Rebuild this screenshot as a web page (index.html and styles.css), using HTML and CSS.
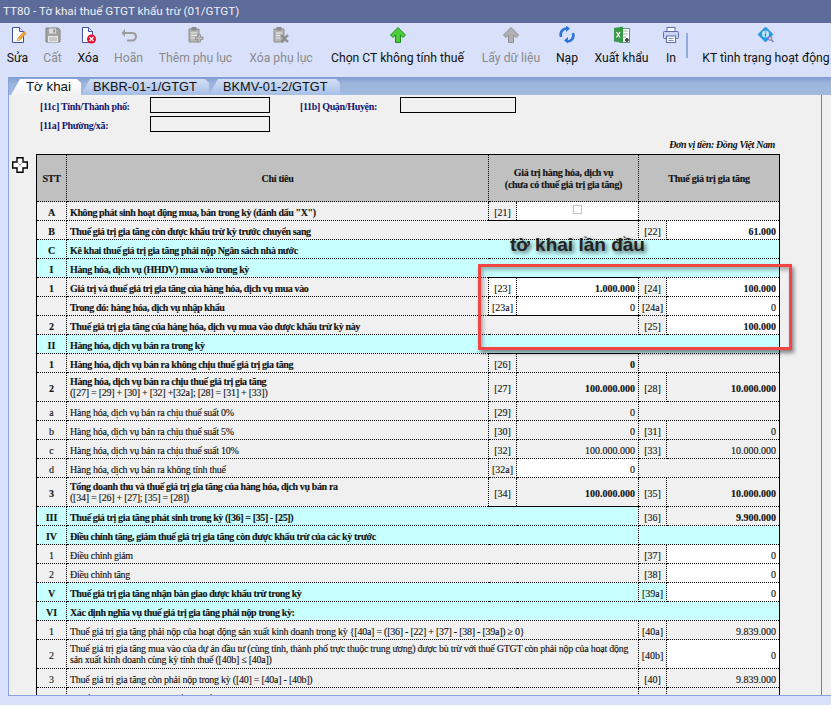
FILE: index.html
```html
<!DOCTYPE html>
<html lang="vi">
<head>
<meta charset="utf-8">
<title>TT80 - Tờ khai thuế GTGT khấu trừ (01/GTGT)</title>
<link rel="stylesheet" href="styles.css">
</head>
<body>
<div class="app">
  <header class="titlebar">TT80 - Tờ khai thuế GTGT khẩu trừ (01/GTGT)</header>
  <nav class="toolbar">
    <button class="tb"><svg class="ic" viewBox="0 0 18 18"><path d="M3.500 1.500h7l4 4v11h-11z" fill="#fff" stroke="#3f51a8"/><path d="M10.500 1.500v4h4" fill="#dfe6fb" stroke="#3f51a8"/><path d="M8 15l1-3 6-6.500 2 2-6 6.500z" fill="#f2a33a" stroke="#b5701d" stroke-width=".6"/><path d="M8 15l1-3 2 1.500z" fill="#f3dcb0"/></svg><span>Sửa</span></button>
    <button class="tb off"><svg class="ic" viewBox="0 0 18 18"><path d="M2 2h12l2 2v12H2z" fill="#a3a3a3" stroke="#808080"/><rect x="5" y="2.500" width="7" height="5" fill="#dcdcdc"/><rect x="9.500" y="3.500" width="1.500" height="3" fill="#808080"/><rect x="4" y="10" width="10" height="6" fill="#e8e8e8"/><path d="M5 12h8M5 14h8" stroke="#999" stroke-width=".8"/></svg><span>Cất</span></button>
    <button class="tb"><svg class="ic" viewBox="0 0 18 18"><path d="M3.500 1.500h6l4 4v11h-10z" fill="#fff" stroke="#3f51a8"/><path d="M9.500 1.500v4h4" fill="#dfe6fb" stroke="#3f51a8"/><circle cx="12.500" cy="13" r="4.500" fill="#e8112d"/><path d="M10.500 11l4 4M14.500 11l-4 4" stroke="#fff" stroke-width="1.300"/></svg><span>Xóa</span></button>
    <button class="tb off"><svg class="ic" viewBox="0 0 18 18"><path d="M5 3L1.500 7 5 11z" fill="#9c9c9c"/><path d="M4 7h8c2.500 0 4 1.500 4 3.500S14.500 14.500 12 14.500H7" fill="none" stroke="#9c9c9c" stroke-width="2"/></svg><span>Hoãn</span></button>
    <button class="tb off"><svg class="ic" viewBox="0 0 18 18"><path d="M2 3h10v13H2z" fill="#b5b5b5" stroke="#8c8c8c"/><rect x="4.500" y="1" width="5" height="3.500" fill="#8c8c8c"/><path d="M4 7h6M4 9.500h6M4 12h4" stroke="#eee"/><path d="M11 8.500h2.500V11H16v2.500h-2.500V16H11v-2.500H8.500V11H11z" fill="#bcbcbc" stroke="#8c8c8c" stroke-width=".8"/></svg><span>Thêm phụ lục</span></button>
    <button class="tb off"><svg class="ic" viewBox="0 0 18 18"><path d="M2 3h10v13H2z" fill="#b5b5b5" stroke="#8c8c8c"/><rect x="4.500" y="1" width="5" height="3.500" fill="#8c8c8c"/><path d="M4 7h6M4 9.500h6M4 12h4" stroke="#eee"/><path d="M9 9l7 7M16 9l-7 7" stroke="#8c8c8c" stroke-width="2.400"/></svg><span>Xóa phụ lục</span></button>
    <button class="tb"><svg class="ic" viewBox="0 0 18 18"><path d="M9 1.500L16.500 9 14 11.500l-2.500-2.500v7.500h-5V9L4 11.500 1.500 9z" fill="#4ccb3c" stroke="#1f8f1a"/></svg><span>Chọn CT không tính thuế</span></button>
    <button class="tb off"><svg class="ic" viewBox="0 0 18 18"><path d="M9 1.500L16.500 9 14 11.500l-2.500-2.500v7.500h-5V9L4 11.500 1.500 9z" fill="#b0b0b0" stroke="#8f8f8f"/></svg><span>Lấy dữ liệu</span></button>
    <button class="tb"><svg class="ic" viewBox="0 0 18 18"><path d="M3 11C1.500 6 5 2.500 8.500 2.500" fill="none" stroke="#2f74d8" stroke-width="2.600"/><path d="M7 0l4 3-4 3.500z" fill="#2f74d8" transform="translate(1 -.5)"/><path d="M15 7c1.500 5-2 8.500-5.500 8.500" fill="none" stroke="#2f74d8" stroke-width="2.600"/><path d="M10 11.500l-4 3.500 4 3z" fill="#2f74d8" transform="translate(0 -.5)"/></svg><span>Nạp</span></button>
    <button class="tb"><svg class="ic" viewBox="0 0 18 18"><path d="M7 2.500h9.500v14H7z" fill="#fff" stroke="#5f8f7f"/><path d="M10 5h5M10 8h5M10 11h3" stroke="#8fb8a8"/><path d="M1 2l9-1.500v16.500L1 15.500z" fill="#3a9a4c"/><path d="M3.500 6l3.500 5.500M7 6l-3.500 5.500" stroke="#fff" stroke-width="1.200"/><path d="M12 14h4M14 12v4" stroke="#333" stroke-width="1.400"/></svg><span>Xuất khẩu</span></button>
    <button class="tb"><svg class="ic" viewBox="0 0 18 18"><rect x="5" y="1.500" width="8" height="4" fill="#fff" stroke="#5b6db0"/><rect x="1.500" y="5.500" width="15" height="7" rx="1" fill="#c9d2f2" stroke="#5b6db0"/><rect x="4.500" y="10" width="9" height="6.500" fill="#fff" stroke="#5b6db0"/><path d="M6.500 12.500h5M6.500 14.500h5" stroke="#5b6db0" stroke-width=".8"/></svg><span>In</span></button>
    <div class="sep"></div>
    <button class="tb"><svg class="ic" viewBox="0 0 18 18"><path d="M8.500 1L16 8.500 8.500 16 1 8.500z" fill="#1f9ce8" stroke="#1575c4" stroke-width=".6"/><circle cx="8.500" cy="8" r="3.600" fill="#bfe6fb"/><path d="M8.500 5.500v1M8.500 7.500v3" stroke="#1575c4" stroke-width="1.200"/><circle cx="13" cy="12.500" r="1.800" fill="#d8d0f0" stroke="#7d6ec0"/><path d="M14.300 13.800l2.200 2.200" stroke="#7d6ec0" stroke-width="1.400"/></svg><span>KT tình trạng hoạt động</span></button>
  </nav>
  <main class="main">
    <div class="tabs">
      <div class="tab active">Tờ khai</div>
      <div class="tab second">BKBR-01-1/GTGT</div>
      <div class="tab third">BKMV-01-2/GTGT</div>
    </div>
    <section class="panel">
      <div class="form">
        <label class="flabel">[11c] Tỉnh/Thành phố:</label><div class="fbox"></div>
        <label class="flabel second-label">[11b] Quận/Huyện:</label><div class="fbox narrow"></div>
        <label class="flabel">[11a] Phường/xã:</label><div class="fbox"></div>
      </div>
      <p class="unit">Đơn vị tiền: Đồng Việt Nam</p>
      <div class="tablewrap">
        <svg class="move" viewBox="0 0 16 16"><path d="M5 .7h6v4.300h4.300v6H11v4.300H5V11H.7V5H5z" fill="#fff" stroke="#000" stroke-width="1.400"/><path d="M4.500 4.500l7 7M11.500 4.500l-7 7" stroke="#555" stroke-width=".8" stroke-dasharray="1 1"/></svg>
        <table class="tax">
          <colgroup><col class="c1"><col class="c2"><col class="c3"><col class="c4"><col class="c5"><col class="c6"></colgroup>
          <thead>
            <tr class="head"><th>STT</th><th>Chỉ tiêu</th><th colspan="2">Giá trị hàng hóa, dịch vụ<br>(chưa có thuế giá trị gia tăng)</th><th colspan="2">Thuế giá trị gia tăng</th></tr>
          </thead>
          <tbody>
            <tr class="bold"><td class="n">A</td><td class="d">Không phát sinh hoạt động mua, bán trong kỳ (đánh dấu "X")</td><td class="k sb">[21]</td><td class="w sb chk"><span class="check"></span></td><td colspan="2"></td></tr>
            <tr class="bold"><td class="n">B</td><td class="d" colspan="3">Thuế giá trị gia tăng còn được khấu trừ kỳ trước chuyển sang</td><td class="k">[22]</td><td class="v w">61.000</td></tr>
            <tr class="bold cy"><td class="n">C</td><td class="d" colspan="5">Kê khai thuế giá trị gia tăng phải nộp Ngân sách nhà nước</td></tr>
            <tr class="bold cy"><td class="n">I</td><td class="d" colspan="5">Hàng hóa, dịch vụ (HHDV) mua vào trong kỳ</td></tr>
            <tr class="bold"><td class="n">1</td><td class="d">Giá trị và thuế giá trị gia tăng của hàng hóa, dịch vụ mua vào</td><td class="k w st">[23]</td><td class="v w st">1.000.000</td><td class="k">[24]</td><td class="v w">100.000</td></tr>
            <tr class="bold"><td class="n"></td><td class="d">Trong đó: hàng hóa, dịch vụ nhập khẩu</td><td class="k w sb reg">[23a]</td><td class="v w sb reg">0</td><td class="k reg">[24a]</td><td class="v w reg">0</td></tr>
            <tr class="bold"><td class="n">2</td><td class="d" colspan="3">Thuế giá trị gia tăng của hàng hóa, dịch vụ mua vào được khấu trừ kỳ này</td><td class="k">[25]</td><td class="v w">100.000</td></tr>
            <tr class="bold cy"><td class="n">II</td><td class="d" colspan="5">Hàng hóa, dịch vụ bán ra trong kỳ</td></tr>
            <tr class="bold"><td class="n">1</td><td class="d">Hàng hóa, dịch vụ bán ra không chịu thuế giá trị gia tăng</td><td class="k st">[26]</td><td class="v st">0</td><td colspan="2"></td></tr>
            <tr class="bold tall"><td class="n">2</td><td class="d">Hàng hóa, dịch vụ bán ra chịu thuế giá trị gia tăng<br><span class="reg">([27] = [29] + [30] + [32] +[32a]; [28] = [31] + [33])</span></td><td class="k">[27]</td><td class="v">100.000.000</td><td class="k">[28]</td><td class="v">10.000.000</td></tr>
            <tr><td class="n">a</td><td class="d">Hàng hóa, dịch vụ bán ra chịu thuế suất 0%</td><td class="k">[29]</td><td class="v">0</td><td colspan="2"></td></tr>
            <tr><td class="n">b</td><td class="d">Hàng hóa, dịch vụ bán ra chịu thuế suất 5%</td><td class="k">[30]</td><td class="v">0</td><td class="k">[31]</td><td class="v">0</td></tr>
            <tr><td class="n">c</td><td class="d">Hàng hóa, dịch vụ bán ra chịu thuế suất 10%</td><td class="k">[32]</td><td class="v">100.000.000</td><td class="k">[33]</td><td class="v">10.000.000</td></tr>
            <tr><td class="n">d</td><td class="d">Hàng hóa, dịch vụ bán ra không tính thuế</td><td class="k">[32a]</td><td class="v w">0</td><td colspan="2"></td></tr>
            <tr class="bold tall"><td class="n">3</td><td class="d">Tổng doanh thu và thuế giá trị gia tăng của hàng hóa, dịch vụ bán ra<br><span class="reg">([34] = [26] + [27]; [35] = [28])</span></td><td class="k sb">[34]</td><td class="v sb">100.000.000</td><td class="k">[35]</td><td class="v">10.000.000</td></tr>
            <tr class="bold"><td class="n cy">III</td><td class="d cy" colspan="3">Thuế giá trị gia tăng phát sinh trong kỳ ([36] = [35] - [25])</td><td class="k">[36]</td><td class="v">9.900.000</td></tr>
            <tr class="bold cy"><td class="n">IV</td><td class="d" colspan="3">Điều chỉnh tăng, giảm thuế giá trị gia tăng còn được khấu trừ của các kỳ trước</td><td colspan="2"></td></tr>
            <tr><td class="n">1</td><td class="d" colspan="3">Điều chỉnh giảm</td><td class="k">[37]</td><td class="v w">0</td></tr>
            <tr><td class="n">2</td><td class="d" colspan="3">Điều chỉnh tăng</td><td class="k">[38]</td><td class="v w">0</td></tr>
            <tr class="bold cy"><td class="n">V</td><td class="d" colspan="3">Thuế giá trị gia tăng nhận bàn giao được khấu trừ trong kỳ</td><td class="k">[39a]</td><td class="v w reg">0</td></tr>
            <tr class="bold cy"><td class="n">VI</td><td class="d" colspan="5">Xác định nghĩa vụ thuế giá trị gia tăng phải nộp trong kỳ:</td></tr>
            <tr><td class="n">1</td><td class="d" colspan="3">Thuế giá trị gia tăng phải nộp của hoạt động sản xuất kinh doanh trong kỳ&nbsp;{[40a] = ([36] - [22] + [37] - [38] - [39a]) ≥ 0}</td><td class="k">[40a]</td><td class="v">9.839.000</td></tr>
            <tr class="tall"><td class="n">2</td><td class="d" colspan="3">Thuế giá trị gia tăng mua vào của dự án đầu tư (cùng tỉnh, thành phố trực thuộc trung ương) được bù trừ với thuế GTGT còn phải nộp của hoạt động<br>sản xuất kinh doanh cùng kỳ tính thuế ([40b] ≤ [40a])</td><td class="k">[40b]</td><td class="v w">0</td></tr>
            <tr><td class="n">3</td><td class="d" colspan="3">Thuế giá trị gia tăng còn phải nộp trong kỳ ([40] = [40a] - [40b])</td><td class="k">[40]</td><td class="v">9.839.000</td></tr>
            <tr><td class="n">4</td><td class="d" colspan="3">Thuế giá trị gia tăng chưa khấu trừ hết kỳ này</td><td class="k">[41]</td><td class="v">0</td></tr>
          </tbody>
        </table>
      </div>
    </section>
    <div class="note">tờ khai lần đầu</div>
    <div class="redbox"></div>
  </main>
</div>
</body>
</html>
```
FILE: styles.css
```css
* { box-sizing: border-box; }
html, body { margin: 0; padding: 0; height: 100%; overflow: hidden; background: #d9e1fa; }
.app { display: flex; flex-direction: column; width: 831px; height: 705px; overflow: hidden; }

.titlebar { flex: none; height: 23px; background: #5c6b99; color: #eef0f7; font: 11.7px/23px Roboto, sans-serif; padding-left: 3px; white-space: nowrap; }

.toolbar { flex: none; height: 54px; background: #d9e1fa; display: grid; grid-template-columns: 35px 35px 36px 45px 89px 82px 151px 76px 36px 73px 26px 10px 144px; overflow: hidden; }
.tb { display: flex; flex-direction: column; align-items: center; background: none; border: 0; padding: 3px 0 0; margin: 0; height: 54px; font: 12.2px/16px Roboto, sans-serif; color: #111; white-space: nowrap; min-width: 0; }
.tb.off { color: #8a8a8a; }
.ic { width: 18px; height: 18px; flex: none; margin-bottom: 6px; }
.sep { width: 2px; height: 25px; margin: 10px 0 0 2px; background: #93abdc; }

.main { position: relative; flex: none; height: 619px; margin-left: 8px; display: flex; flex-direction: column; overflow: hidden; background: #f0f0f0; border-left: 1px solid #8ba3e0; border-bottom: 1px solid #8ba3e0; }

.tabs { flex: none; height: 18px; display: flex; align-items: flex-end; padding-left: 2px; background: linear-gradient(#7f9bd3, #9cb5dd 35%, #a2badf); }
.tab { height: 16px; font: 12.8px/15px "Liberation Sans", sans-serif; color: #111; white-space: nowrap; clip-path: polygon(0 100%, 9px 0, calc(100% - 4px) 0, 100% 4px, 100% 100%); background: linear-gradient(#d3e0f5, #a7bfe6); }
.tab.active { width: 70px; padding-left: 15px; font-size: 13.3px; background: linear-gradient(#fff, #f2f2f2); }
.tab.second { width: 128px; padding-left: 12px; }
.tab.third { width: 131px; padding-left: 14px; }

.panel { flex: 1; min-height: 0; background: #f0f0f0; overflow: hidden; font-family: "Liberation Serif", serif; width: 813px; border-right: 1px solid #808080; position: relative; }

.form { display: grid; grid-template-columns: 110px 120px 30px 100px 116px; grid-auto-rows: 16px; row-gap: 3px; padding: 2px 0 0 31px; }
.flabel { font-size: 10px; letter-spacing: -.33px; font-weight: bold; line-height: 20px; color: #14146e; grid-column: 1; }
.second-label { grid-column: 4; grid-row: 1; }
.fbox { border: 1px solid #000; background: #f0f0f0; grid-column: 2; }
.fbox.narrow { grid-column: 5; grid-row: 1; }

.unit { margin: 6px 0 0; height: 13px; padding-right: 46px; text-align: right; font-size: 10px; letter-spacing: -.38px; line-height: 13px; font-weight: bold; font-style: italic; color: #111; }

.tablewrap { position: relative; padding: 3px 0 0 27px; }
.move { position: absolute; left: 3px; top: 6px; width: 16px; height: 16px; }

.tax { border-collapse: collapse; table-layout: fixed; width: 743px; font-size: 10px; color: #111; border: 1px solid #000; -webkit-text-stroke: .12px #111; }
.c1 { width: 30px; } .c2 { width: 422px; } .c3 { width: 28px; } .c4 { width: 122px; } .c5 { width: 28px; } .c6 { width: 113px; }
.tax th, .tax td { padding: 3px 0 0; border: 1px dotted #000; height: 19px; line-height: 11px; }
.tax th { background: #c0c0c0; font-weight: bold; letter-spacing: -.28px; color: #111; text-align: center; border-top: 1px solid #000; line-height: 12px; padding-top: 1px; }
.tax .head th { height: 47px; }
.tax tr.tall td { height: 29px; padding-top: 2px; }
.tax tr.tall td.d { padding-top: 0; }
.bold td { font-weight: bold; }
.d { letter-spacing: -.25px; }
.bold .d { letter-spacing: -.38px; }
.reg, .bold .reg { font-weight: normal; letter-spacing: -.25px; }
.cy td, td.cy { background: #c8ffff; }
.n { text-align: center; color: #111; }
.d { padding-left: 3px !important; white-space: nowrap; overflow: hidden; color: #111; }
.k { text-align: center; font-weight: normal; }
.bold .k, .bold .k.reg { font-weight: normal; letter-spacing: 0; }
.v, .bold .v.reg { text-align: right; padding-right: 3px !important; letter-spacing: 0; }
.tax .w { background: #fff; }
.tax .sb { border-bottom: 1px solid #000; }
.tax .st { border-top: 1px solid #000; }
.tax .chk { text-align: center; vertical-align: top; padding-top: 0; }
.check { display: inline-block; width: 9px; height: 9px; margin-top: 3px; border: 1px solid #c4c4c4; background: #fff; }

.note { position: absolute; left: 501px; top: 157px; font: bold 19px/22px "Liberation Sans", sans-serif; color: #222; white-space: nowrap; text-shadow: 2px 2px 4px rgba(0,0,0,.65); }
.redbox { position: absolute; left: 469px; top: 187px; width: 314px; height: 86px; border: 3px solid #f44545; box-shadow: 2px 3px 4px rgba(0,0,0,.45), inset 2px 3px 4px rgba(0,0,0,.3); }
```
